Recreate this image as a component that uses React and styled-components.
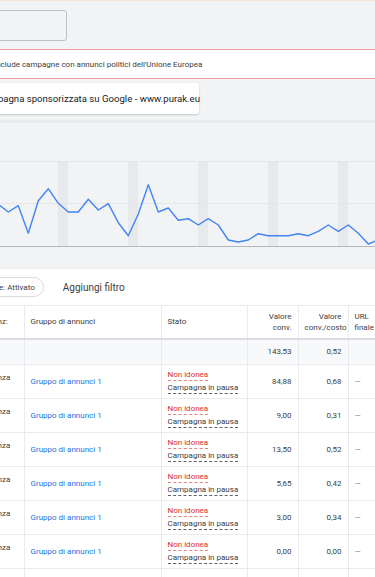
import React from "react";
import styled, { createGlobalStyle } from "styled-components";

const Global = createGlobalStyle`
  html, body {
    margin: 0;
    padding: 0;
    background: #f1f3f4;
    overflow: hidden;
  }
  body {
    font-family: Roboto, "Noto Sans", Arial, sans-serif;
    color: #3c4043;
  }
`;

const Page = styled.div`
  width: 375px;
  height: 577px;
  overflow: hidden;
  display: flex;
  flex-direction: column;
`;

const NoticeStrip = styled.div`
  height: 3px;
  background: #fdf0ea;
  border-bottom: 1px solid #f6e3da;
`;

const Top = styled.div`
  display: flex;
  flex-direction: column;
  padding-top: 9px;
`;

const SearchBox = styled.div`
  width: 75px;
  height: 29px;
  margin-left: -10px;
  border: 1px solid #bdc1c6;
  border-radius: 3px;
`;

const Warning = styled.div`
  margin-top: 8px;
  height: 28px;
  background: #fff;
  border-top: 1px solid #e8a19d;
  border-bottom: 1px solid #e8a19d;
  display: flex;
  align-items: center;
  font-size: 8px;
  color: #3c4043;
  white-space: nowrap;
  & span {
    margin-left: -6px;
  }
`;

const AdCard = styled.div`
  margin-top: 4px;
  margin-left: -30px;
  width: 229px;
  height: 31px;
  background: #fff;
  border-radius: 3px;
  box-shadow: 0 1px 2px rgba(60, 64, 67, 0.25);
  display: flex;
  align-items: center;
  padding-left: 8px;
  box-sizing: border-box;
  font-size: 9.6px;
  color: #202124;
  white-space: nowrap;
`;

const Divider = styled.div`
  margin-top: 6px;
  height: 3px;
  background: #e8eaed;
`;

const ChartWrap = styled.div`
  height: 145px;
  background: #f1f3f4;
  & svg {
    display: block;
  }
`;

const Content = styled.div`
  flex: 1;
  background: #fff;
  border-top: 1px solid #eceef0;
`;

const FilterBar = styled.div`
  height: 36px;
  display: flex;
  align-items: center;
  gap: 19px;
`;

const Chip = styled.div`
  margin-left: -85px;
  height: 18px;
  padding: 0 8px 0 10px;
  border: 1px solid #dadce0;
  border-radius: 10px;
  display: flex;
  align-items: center;
  font-size: 8px;
  color: #3c4043;
  white-space: nowrap;
`;

const AddFilter = styled.div`
  font-size: 10px;
  color: #3c4043;
`;

const Table = styled.table`
  margin-left: -60px;
  border-collapse: collapse;
  table-layout: fixed;
  width: 484px;
  border-top: 1px solid #e8eaed;
`;

const HeadRow = styled.tr`
  height: 33px;
`;

const TotalRow = styled.tr`
  height: 26px;
  background: #f8f9fa;
`;

const Row = styled.tr`
  height: 34px;
`;

const Th = styled.th`
  padding: 0 6px 0 ${(p) => p.$pl || "6px"};
  font-size: 8px;
  font-weight: 400;
  color: #3c4043;
  line-height: 11px;
  text-align: ${(p) => p.$align || "left"};
  vertical-align: middle;
  border-right: 1px solid #e8eaed;
  border-bottom: 2px solid #dadce0;
  white-space: nowrap;
  overflow: hidden;
`;

const TotalTd = styled.td`
  padding: 0 6px;
  font-size: 8px;
  color: #3c4043;
  text-align: ${(p) => p.$align || "left"};
  border-right: 1px solid #e8eaed;
  border-bottom: 1px solid #e8eaed;
`;

const Td = styled.td`
  padding: 0 6px 0 ${(p) => p.$pl || "6px"};
  font-size: 8px;
  color: #3c4043;
  text-align: ${(p) => p.$align || "left"};
  vertical-align: middle;
  border-right: 1px solid #e8eaed;
  border-bottom: 1px solid #e8eaed;
  white-space: nowrap;
  overflow: hidden;
`;

const Match = styled.div`
  margin-top: -8px;
`;

const Link = styled.span`
  color: #1a73e8;
`;

const Status = styled.div`
  display: flex;
  flex-direction: column;
  align-items: flex-start;
  gap: 2px;
`;

const StatusLine = styled.span`
  color: ${(p) => (p.$error ? "#d93025" : "#3c4043")};
  border-bottom: 1px dashed ${(p) => (p.$error ? "#e8837b" : "#5f6368")};
  line-height: 10px;
`;

const Dash = styled.span`
  color: #80868b;
`;

const points = [
  [-1.7, 206.3], [8.3, 214], [18.3, 207.7], [28.3, 235.3], [38.3, 202.7],
  [48.3, 190.7], [58.3, 205.3], [68.3, 214], [78.3, 214], [88.3, 201.3],
  [98.3, 212], [108.3, 205.7], [118.3, 224.7], [128.3, 237.7], [138.3, 216],
  [148.3, 186.7], [158.3, 214], [168.3, 210], [178.3, 222.3], [188.3, 220.7],
  [198.3, 227], [208.3, 220.7], [218.3, 227], [228.3, 242], [238.3, 244],
  [248.3, 242], [258.3, 235.7], [268.3, 237.7], [278.3, 237.7], [288.3, 237.7],
  [298.3, 235.7], [308.3, 237.7], [318.3, 233.3], [328.3, 227], [338.3, 233.3],
  [348.3, 227], [358.3, 235.3], [368.3, 246], [378.3, 242],
];

const Chart = () => {
  const top = 125;
  const d = points
    .map(([x, y], i) => `${i ? "L" : "M"}${x} ${(y - top).toFixed(1)}`)
    .join(" ");
  return (
    <svg width="375" height="145" viewBox="0 0 375 145">
      {[58, 128, 198, 268, 338].map((x) => (
        <rect key={x} x={x} y="38" width="10" height="85" fill="#e8e9ec" />
      ))}
      <line x1="0" x2="375" y1="38.5" y2="38.5" stroke="#e4e6e9" />
      <line x1="0" x2="375" y1="80.5" y2="80.5" stroke="#e4e6e9" />
      <line x1="0" x2="375" y1="123.5" y2="123.5" stroke="#b4b7bb" />
      <path d={d} fill="none" stroke="#4285f4" strokeWidth="1.4" strokeLinejoin="round" />
    </svg>
  );
};

const rows = [
  ["84,88", "0,68"],
  ["9,00", "0,31"],
  ["13,50", "0,52"],
  ["5,65", "0,42"],
  ["3,00", "0,34"],
  ["0,00", "0,00"],
  ["", ""],
];

export default function App() {
  return (
    <Page>
      <Global />
      <NoticeStrip />
      <Top>
        <SearchBox />
        <Warning>
          <span>Include campagne con annunci politici dell'Unione Europea</span>
        </Warning>
        <AdCard>Campagna sponsorizzata su Google - www.purak.eu</AdCard>
        <Divider />
      </Top>
      <ChartWrap>
        <Chart />
      </ChartWrap>
      <Content>
        <FilterBar>
          <Chip>Stato delle campagne: Attivato</Chip>
          <AddFilter>Aggiungi filtro</AddFilter>
        </FilterBar>
        <Table>
          <colgroup>
            <col style={{ width: 84 }} />
            <col style={{ width: 137 }} />
            <col style={{ width: 86 }} />
            <col style={{ width: 51 }} />
            <col style={{ width: 50 }} />
            <col style={{ width: 76 }} />
          </colgroup>
          <thead>
            <HeadRow>
              <Th $pl="14px">Corrispondenz:</Th>
              <Th>Gruppo di annunci</Th>
              <Th>Stato</Th>
              <Th $align="right">Valore<br />conv.</Th>
              <Th $align="right">Valore<br />conv./costo</Th>
              <Th>URL<br />finale</Th>
            </HeadRow>
          </thead>
          <tbody>
            <TotalRow>
              <TotalTd />
              <TotalTd />
              <TotalTd />
              <TotalTd $align="right">143,53</TotalTd>
              <TotalTd $align="right">0,52</TotalTd>
              <TotalTd />
            </TotalRow>
            {rows.map(([v, r], i) => (
              <Row key={i}>
                <Td $pl="14px">{v && <Match>Corrispondenza</Match>}</Td>
                <Td>{v && <Link>Gruppo di annunci 1</Link>}</Td>
                <Td>
                  {v && (
                    <Status>
                      <StatusLine $error>Non idonea</StatusLine>
                      <StatusLine>Campagna in pausa</StatusLine>
                    </Status>
                  )}
                </Td>
                <Td $align="right">{v}</Td>
                <Td $align="right">{r}</Td>
                <Td>{v && <Dash>—</Dash>}</Td>
              </Row>
            ))}
          </tbody>
        </Table>
      </Content>
    </Page>
  );
}
